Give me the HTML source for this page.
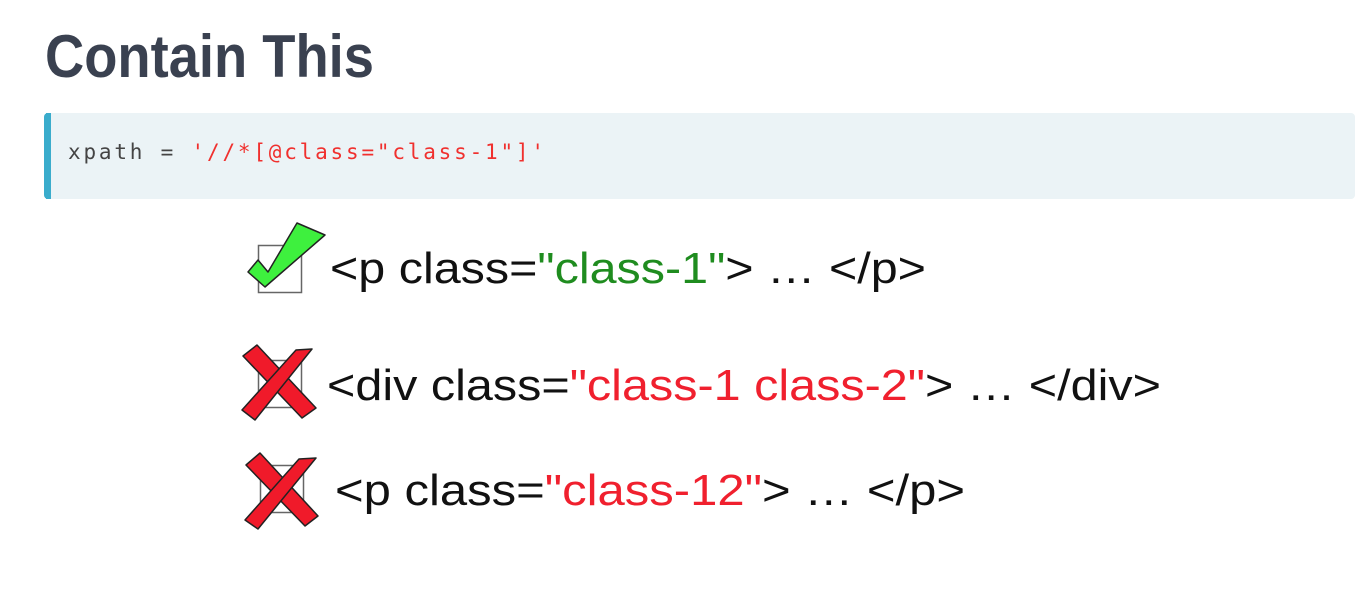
<!DOCTYPE html>
<html><head><meta charset="utf-8"><style>
html,body{margin:0;padding:0;background:#fff;width:1372px;height:590px;overflow:hidden}
</style></head><body>
<svg width="1372" height="590" viewBox="0 0 1372 590" xmlns="http://www.w3.org/2000/svg" xml:space="preserve">
<text x="45" y="77" font-family="Liberation Sans, sans-serif" font-weight="bold" font-size="60" fill="#3a4150" textLength="329" lengthAdjust="spacingAndGlyphs">Contain This</text>
<rect x="44" y="113" width="1311" height="86" rx="4" fill="#ebf3f6"/>
<path d="M48 113 h2 v86 h-2 a4 4 0 0 1 -4 -4 v-78 a4 4 0 0 1 4 -4z" fill="#3aaccc"/>
<rect x="46" y="113" width="5" height="86" fill="#3aaccc"/>
<text x="68" y="159" font-family="DejaVu Sans Mono, Liberation Mono, monospace" font-size="21" textLength="476" lengthAdjust="spacing"><tspan fill="#444">xpath = </tspan><tspan fill="#f0302e">'//*[@class="class-1"]'</tspan></text>

<rect x="258.5" y="245.5" width="43" height="47" fill="none" stroke="#666" stroke-width="1.5"/>
<polygon points="248,272 258,260 268,272 297,223 325,235 265,287" fill="#3ef03e" stroke="#222" stroke-width="1.5" stroke-linejoin="round"/>
<text x="330" y="283" font-family="Liberation Sans, sans-serif" font-size="44" fill="#111" textLength="596" lengthAdjust="spacingAndGlyphs">&lt;p  class=<tspan fill="#1f8c1f">"class-1"</tspan>&gt;  …  &lt;/p&gt;</text>

<rect x="258.5" y="360.5" width="43" height="47" fill="none" stroke="#666" stroke-width="1.5"/>
<g stroke="#222" stroke-width="1.5" fill="#f01a2a" stroke-linejoin="round">
<polygon points="243,356 257,345 316,408 302,418"/>
<polygon points="242,410 296,350 312,349 255,420"/>
</g>
<text x="327" y="400" font-family="Liberation Sans, sans-serif" font-size="44" fill="#111" textLength="834" lengthAdjust="spacingAndGlyphs">&lt;div  class=<tspan fill="#f0202e">"class-1  class-2"</tspan>&gt;  …  &lt;/div&gt;</text>

<rect x="260.5" y="465.5" width="43" height="47" fill="none" stroke="#666" stroke-width="1.5"/>
<g stroke="#222" stroke-width="1.5" fill="#f01a2a" stroke-linejoin="round">
<polygon points="246,465 260,453 318,516 305,526"/>
<polygon points="245,520 299,459 316,458 258,529"/>
</g>
<text x="335" y="505" font-family="Liberation Sans, sans-serif" font-size="44" fill="#111" textLength="630" lengthAdjust="spacingAndGlyphs">&lt;p  class=<tspan fill="#f0202e">"class-12"</tspan>&gt;  …  &lt;/p&gt;</text>
</svg>
</body></html>
